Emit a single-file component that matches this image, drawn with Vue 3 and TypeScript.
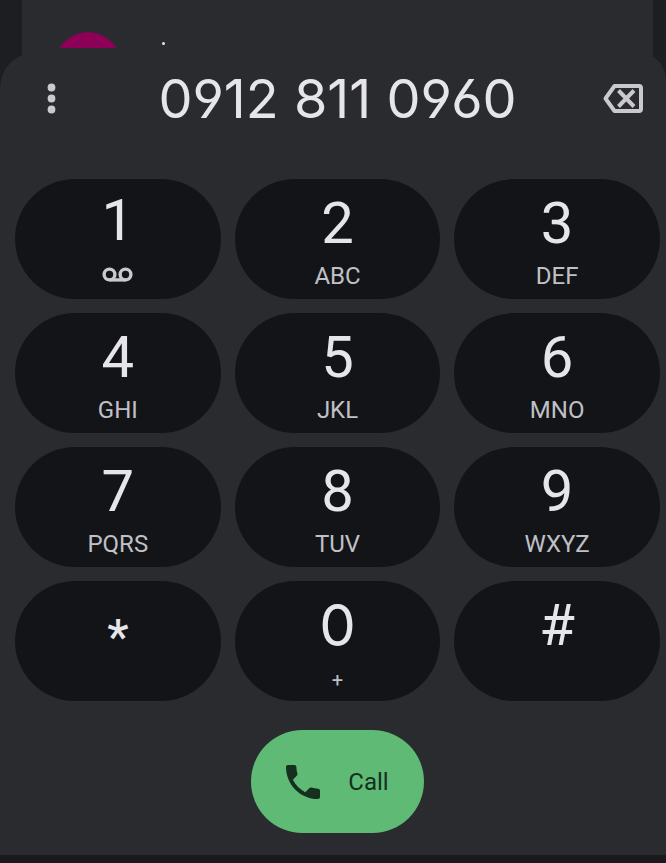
<script setup lang="ts">
import { ref } from 'vue'

interface DialKey {
  value: string
  letters?: string
  voicemail?: boolean
  kind?: 'star' | 'zero' | 'one'
}

const keys: DialKey[] = [
  { value: '1', voicemail: true, kind: 'one' },
  { value: '2', letters: 'ABC' },
  { value: '3', letters: 'DEF' },
  { value: '4', letters: 'GHI' },
  { value: '5', letters: 'JKL' },
  { value: '6', letters: 'MNO' },
  { value: '7', letters: 'PQRS' },
  { value: '8', letters: 'TUV' },
  { value: '9', letters: 'WXYZ' },
  { value: '*', kind: 'star' },
  { value: '0', letters: '+', kind: 'zero' },
  { value: '#' },
]

const phoneNumber = ref('0912 811 0960')

function press(key: DialKey) {
  phoneNumber.value += key.value
}

function erase() {
  phoneNumber.value = phoneNumber.value.slice(0, -1).trimEnd()
}
</script>

<template>
  <div class="screen">
    <div class="history">
      <div class="contact">
        <div class="avatar-clip"><div class="avatar"></div></div>
        <div class="name-dot"></div>
      </div>
    </div>

    <main class="sheet">
      <header class="number-row">
        <button class="icon-button" type="button" aria-label="More options">
          <svg width="10" height="32" viewBox="0 0 10 32" fill="currentColor">
            <circle cx="4.500" cy="4.500" r="3.900" />
            <circle cx="4.500" cy="15.500" r="3.900" />
            <circle cx="4.500" cy="26.500" r="3.900" />
          </svg>
        </button>
        <output class="number">{{ phoneNumber }}</output>
        <button class="icon-button" type="button" aria-label="Delete" @click="erase">
          <svg width="42" height="30" viewBox="0 0 42 30" fill="none" stroke="currentColor" stroke-width="4">
            <path d="M11.500 2H36a2 2 0 0 1 2 2V25a2 2 0 0 1-2 2H11.500L2.500 14.500z" stroke-linejoin="round" />
            <path d="M15.500 6.500 31 22.500M31 6.500 15.500 22.500" />
          </svg>
        </button>
      </header>

      <div class="pad">
        <button v-for="key in keys" :key="key.value" type="button" class="key" :class="key.kind" @click="press(key)">
          <span class="digit">{{ key.value }}</span>
          <span v-if="key.letters" class="letters">{{ key.letters }}</span>
          <svg v-if="key.voicemail" class="voicemail" width="32" height="16" viewBox="0 0 32 16" fill="none" stroke="currentColor" stroke-width="3.400">
            <circle cx="7.500" cy="7.500" r="5.400" />
            <circle cx="23.500" cy="7.500" r="5.400" />
            <path d="M7.500 12.900H23.500" />
          </svg>
        </button>
      </div>

      <button class="call" type="button">
        <svg width="34" height="34" viewBox="3 3 18 18" fill="currentColor">
          <path d="M6.620 10.790c1.440 2.830 3.760 5.140 6.590 6.590l2.200-2.200c.270-.270.670-.360 1.020-.240 1.120.370 2.330.570 3.570.570.550 0 1 .450 1 1V20c0 .550-.450 1-1 1C10.610 21 3 13.390 3 4c0-.550.450-1 1-1h3.500c.550 0 1 .450 1 1 0 1.250.2 2.450.570 3.570.110.350.030.740-.250 1.020z" />
        </svg>
        <span>Call</span>
      </button>
    </main>

    <div class="nav-edge"></div>
  </div>
</template>

<style>
body {
  margin: 0;
  background: #1b1c20;
}
</style>

<style scoped>
.screen {
  display: flex;
  flex-direction: column;
  min-height: 100vh;
  background: #1c1e21;
  font-family: Roboto, "Liberation Sans", sans-serif;
}

button {
  padding: 0;
  border: 0;
  background: none;
  color: inherit;
  font: inherit;
  cursor: pointer;
}

.history {
  margin: 0 13px 0 22px;
  padding: 32px 33px 0;
  height: 60px;
  box-sizing: border-box;
  background: #2a2b2f;
}

.contact {
  display: flex;
  align-items: flex-start;
  gap: 41px;
}

.avatar-clip {
  width: 66px;
  height: 16px;
  overflow: hidden;
}

.avatar {
  height: 66px;
  border-radius: 50%;
  background: #8d0057;
}

.name-dot {
  width: 3px;
  height: 3px;
  margin-top: 10px;
  border-radius: 50%;
  background: #e6e6e9;
}

.sheet {
  flex: 1;
  display: flex;
  flex-direction: column;
  margin-top: -8px;
  padding: 0 6px 22px 15px;
  border-radius: 36px 28px 0 0;
  background: #2a2b2f;
  color: #e5e5ea;
}

.number-row {
  display: grid;
  grid-template-columns: 73px 1fr 73px;
  align-items: center;
  height: 93px;
  margin-bottom: 34px;
}

.icon-button {
  display: flex;
  align-items: center;
  justify-content: center;
  height: 56px;
  color: #c9c9ce;
}

.icon-button svg {
  display: block;
}

.number {
  text-align: center;
  font: 400 54px/64px Inter, Roboto, sans-serif;
  font-feature-settings: "ss01";
}

.pad {
  display: grid;
  grid-template-columns: repeat(3, 1fr);
  gap: 14px;
}

.key {
  display: flex;
  flex-direction: column;
  align-items: center;
  height: 120px;
  padding-top: 12px;
  box-sizing: border-box;
  border-radius: 60px;
  background: #131418;
}

.digit {
  font-size: 58px;
  line-height: 64px;
}

.letters {
  margin-top: 6px;
  font-size: 24px;
  line-height: 30px;
  color: #c0c0c6;
}

.one {
  padding-top: 9px;
}

.voicemail {
  margin-top: 15px;
  color: #c9c9ce;
}

.star {
  padding-top: 24px;
}

.star .digit {
  font-size: 48px;
  font-weight: 500;
}

.zero .digit {
  font-family: Inter, Roboto, sans-serif;
}

.zero .letters {
  margin-top: 8px;
  font-size: 20px;
}

.call {
  display: flex;
  align-items: center;
  justify-content: center;
  gap: 28px;
  align-self: center;
  width: 173px;
  height: 103px;
  margin-top: 29px;
  border-radius: 52px;
  background: #5fba76;
  color: #15301e;
}

.call span {
  font-size: 24px;
}

.nav-edge {
  height: 8px;
  background: #1a1a1e;
}
</style>
